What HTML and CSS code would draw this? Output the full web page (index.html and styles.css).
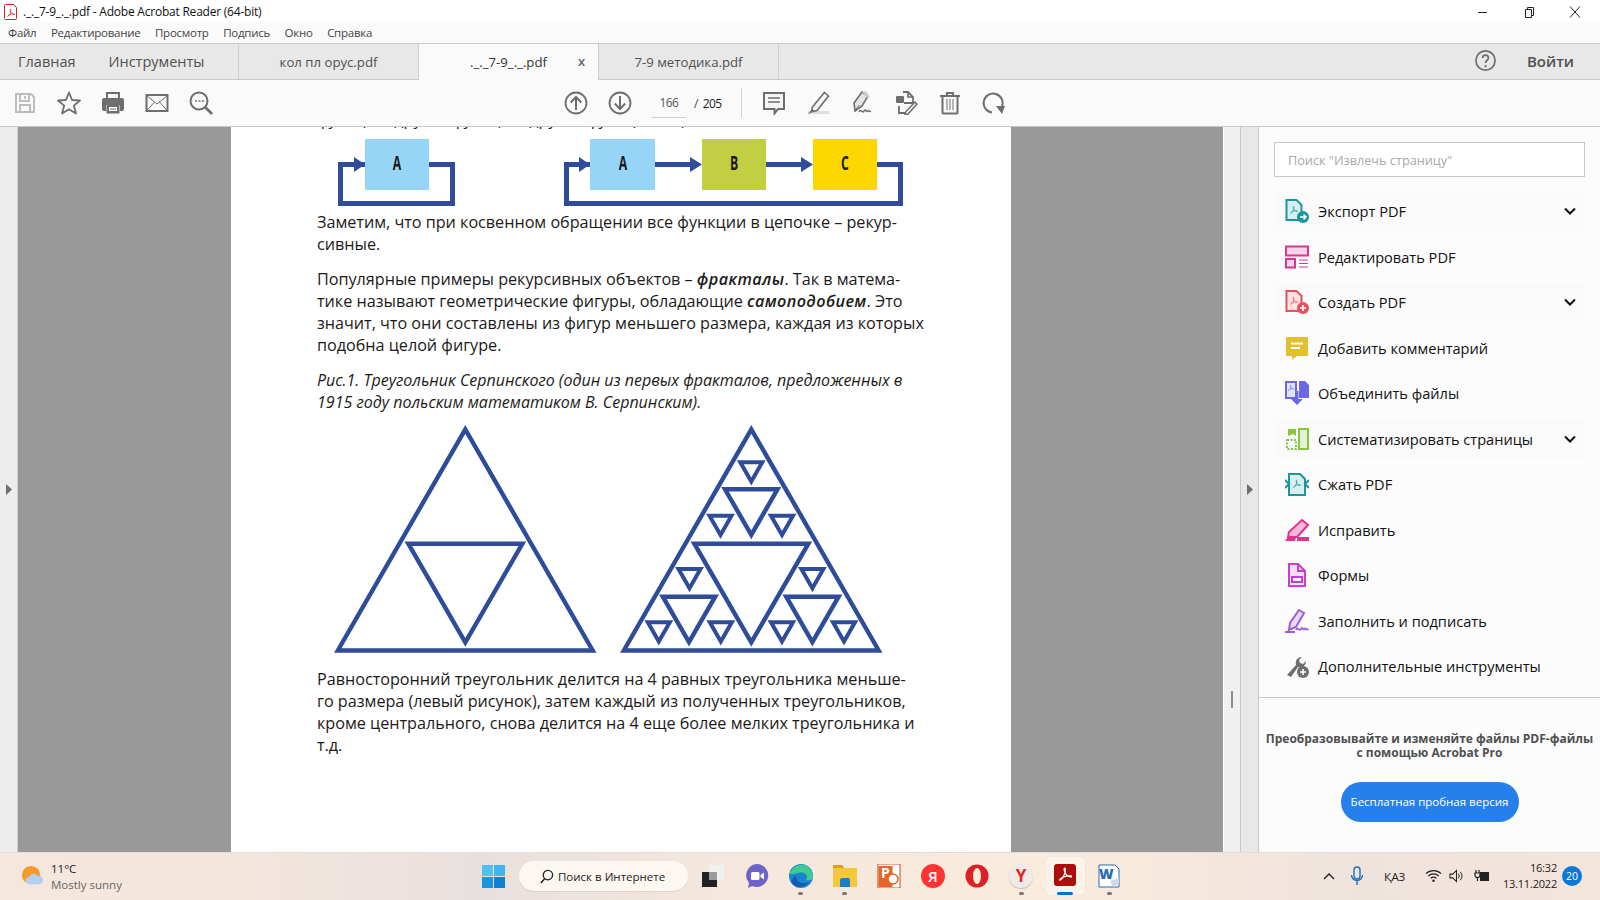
FILE: index.html
```html
<!DOCTYPE html>
<html lang="ru">
<head>
<meta charset="utf-8">
<title>Adobe Acrobat Reader</title>
<link rel="stylesheet" href="styles.css">
</head>
<body>
<svg class="defs" width="0" height="0">
  <symbol id="acro" viewBox="0 0 24 24"><path fill="none" stroke="currentColor" stroke-width="1.7" stroke-linejoin="round" d="M4 20c3-1 6-6 7.500-12 .5-3 .2-5-.7-5s-1 2.500 0 5c1.500 4 4.500 7 8.500 7.500 1.500.2 1.800-1 .2-1.500-3-.8-9.500.5-13 3-2 1.500-3.500 3-2.500 3z"/></symbol>
</svg>
<div class="titlebar">
  <svg class="ti-icon" viewBox="0 0 14 16"><path d="M1.500.5h8l3 3v11a1 1 0 0 1-1 1h-10a1 1 0 0 1-1-1v-13a1 1 0 0 1 1-1z" fill="#fff" stroke="#c9242b"/><use href="#acro" x="2" y="4" width="10" height="10" color="#c9242b"/></svg>
  <span class="ti-text">._._7-9_._.pdf - Adobe Acrobat Reader (64-bit)</span>
  <div class="winbtns">
    <svg viewBox="0 0 12 12"><path d="M1 6.500h9" stroke="#222" fill="none"/></svg>
    <svg viewBox="0 0 12 12"><path d="M2.500 3.500h6v8h-6zM4.500 3.500v-2h6v8h-2" stroke="#222" fill="none"/></svg>
    <svg viewBox="0 0 12 12"><path d="M1 .5l10 11M11 .5l-10 11" stroke="#222" fill="none"/></svg>
  </div>
</div>
<div class="menubar">
  <span>Файл</span><span>Редактирование</span><span>Просмотр</span><span>Подпись</span><span>Окно</span><span>Справка</span>
</div>
<div class="tabbar">
  <div class="hometabs"><span>Главная</span><span>Инструменты</span></div>
  <div class="tab tab-a">кол пл орус.pdf</div>
  <div class="tab tab-b active"><span>._._7-9_._.pdf</span><b class="tabx">x</b></div>
  <div class="tab tab-c">7-9 методика.pdf</div>
  <div class="tabright">
    <svg class="help" viewBox="0 0 24 24"><circle cx="12" cy="12" r="10" fill="none" stroke="#6e6e6e" stroke-width="1.800"/><path d="M9 9.500c0-4 6-4 6 0 0 2.500-3 2.500-3 5" fill="none" stroke="#6e6e6e" stroke-width="1.800"/><circle cx="12" cy="18" r="1.200" fill="#6e6e6e"/></svg>
    <span class="login">Войти</span>
  </div>
</div>
<div class="toolbar">
  <div class="tgroup tg-left">
    <svg class="tool" viewBox="0 0 24 24"><path d="M3 3h15l3 3v15H3z M7 3v7h9V3 M7 21v-7h10v7 M12 5v3" fill="none" stroke="#bdbdbd" stroke-width="2"/></svg>
    <svg class="tool" viewBox="0 0 24 24"><polygon points="12,1.500 15,9 23,9.500 16.800,14.600 19,22.500 12,18.200 5,22.500 7.200,14.600 1,9.500 9,9" fill="none" stroke="#6e6e6e" stroke-width="1.800" stroke-linejoin="round"/></svg>
    <svg class="tool" viewBox="0 0 24 24"><path d="M6 8V2h12v6" fill="none" stroke="#6e6e6e" stroke-width="2"/><path d="M3 7h18a2 2 0 0 1 2 2v9a2 2 0 0 1-2 2h-2v-6H5v6H3a2 2 0 0 1-2-2V9a2 2 0 0 1 2-2z" fill="#6e6e6e"/><path d="M5.500 14h13v8.500h-13z" fill="#6e6e6e"/><path d="M8 16h8v4H8z" fill="#fff"/><path d="M9 18h6" stroke="#6e6e6e"/></svg>
    <svg class="tool" viewBox="0 0 24 24"><rect x="1.500" y="4" width="21" height="16" fill="none" stroke="#6e6e6e" stroke-width="2"/><path d="M1.500 4.500L12 13l10.500-8.500M1.500 20L9.500 11M22.500 20l-8-9" fill="none" stroke="#6e6e6e"/></svg>
    <svg class="tool" viewBox="0 0 24 24"><circle cx="10" cy="10" r="8.500" fill="none" stroke="#6e6e6e" stroke-width="2"/><path d="M16 16l7 7" stroke="#6e6e6e" stroke-width="2.600"/><path d="M6 10h2M9.500 10h2M13 10h2" stroke="#6e6e6e" stroke-width="1.600"/></svg>
  </div>
  <div class="tgroup tg-mid">
    <svg class="tool" viewBox="0 0 24 24"><circle cx="12" cy="12" r="10.500" fill="none" stroke="#6e6e6e" stroke-width="1.800"/><path d="M12 19V6.500M6.800 11.500L12 6l5.200 5.500" fill="none" stroke="#6e6e6e" stroke-width="2"/></svg>
    <svg class="tool" viewBox="0 0 24 24"><circle cx="12" cy="12" r="10.500" fill="none" stroke="#6e6e6e" stroke-width="1.800"/><path d="M12 5v12.500M6.800 12.500L12 18l5.200-5.500" fill="none" stroke="#6e6e6e" stroke-width="2"/></svg>
    <div class="pager"><span class="pgnum">166</span><span class="pgsl">/</span><span class="pgtot">205</span></div>
    <div class="tsep"></div>
    <svg class="tool" viewBox="0 0 24 24"><path d="M2 2h20v16h-6l-3.500 4.500V18H2z" fill="#f5f5f5" stroke="#6e6e6e" stroke-width="2"/><path d="M6 7h12M6 11h12" stroke="#6e6e6e" stroke-width="1.600"/></svg>
    <svg class="tool" viewBox="0 0 24 24"><path d="M2 20h21v3H2z" fill="#dedede"/><path d="M18.500 1.500l4 3.500L11 19.500l-4.500 1-.5-4z" fill="#f5f5f5" stroke="#6e6e6e" stroke-width="1.600"/><path d="M2 23l4-5 3 2z" fill="#6e6e6e"/></svg>
    <svg class="tool" viewBox="0 0 24 24"><path d="M12 1l6 4-6 10-7 5-1-8z" fill="#e4e4e4" stroke="#6e6e6e" stroke-width="1.600"/><path d="M4.500 20l5-6" stroke="#6e6e6e"/><path d="M9 21c2-4 3 2 5-1s2 2 3.500 0 1 2 3.500 0" fill="none" stroke="#6e6e6e" stroke-width="1.500"/><path d="M12 1l4-1 4 6-2 1z" fill="#cfcfcf"/></svg>
    <svg class="tool" viewBox="0 0 24 24"><path d="M9 1h5l5 5v6h-9" fill="none" stroke="#6e6e6e" stroke-width="1.800"/><path d="M14 1v5h5" fill="none" stroke="#6e6e6e" stroke-width="1.600"/><rect x="2" y="5" width="8" height="7" rx="1" fill="#6e6e6e"/><path d="M5 15v7h7" fill="none" stroke="#6e6e6e" stroke-width="1.800"/><path d="M21 11l2 2-9 10-3 .8.800-3z" fill="#f5f5f5" stroke="#6e6e6e" stroke-width="1.500"/></svg>
    <svg class="tool" viewBox="0 0 24 24"><path d="M2 5h20M9 5V2h6v3" fill="none" stroke="#6e6e6e" stroke-width="2"/><path d="M4.500 5.500v16a1 1 0 0 0 1 1h13a1 1 0 0 0 1-1v-16" fill="none" stroke="#6e6e6e" stroke-width="2"/><path d="M9 8v11M12 8v11M15 8v11" stroke="#6e6e6e"/></svg>
    <svg class="tool" viewBox="0 0 24 24"><path d="M10 21.500A9.500 9.500 0 1 1 20 15.500" fill="none" stroke="#6e6e6e" stroke-width="2"/><path d="M14 15h9l-3 8z" fill="#6e6e6e"/></svg>
  </div>
</div>
<div class="workspace">
  <div class="rail rail-l"><svg class="railarrow" viewBox="0 0 6 11"><path d="M0 0l6 5.500L0 11z" fill="#6e6e6e"/></svg></div>
  <div class="docview">
    <div class="page">
      <div class="clipline">функции, другие функции, другие функции в цепочке</div>
      <svg class="flow" viewBox="0 0 566 68">
        <g fill="none" stroke="#2f4c9b" stroke-width="5">
          <path d="M27 25.500H2.500V64.500H114.500V25.500H91"/>
          <path d="M252 25.500H228.500V64.500H562.500V25.500H539"/>
          <path d="M316 25.500H355M428 25.500H466"/>
        </g>
        <g fill="#2f4c9b">
          <path d="M16 18l11 7.500-11 7.500z"/><path d="M241 18l11 7.500-11 7.500z"/>
          <path d="M352 18l12 7.500-12 7.500z"/><path d="M463 18l12 7.500-12 7.500z"/>
        </g>
        <rect class="sky" x="27" y="0" width="64" height="51"/>
        <rect class="sky" x="252" y="0" width="65" height="51"/>
        <rect class="lime" x="364" y="0" width="64" height="51"/>
        <rect class="sun" x="475" y="0" width="64" height="51"/>
        <g class="boxlabel">
          <text transform="translate(59 31) scale(.68 1.08)">A</text>
          <text transform="translate(285 31) scale(.68 1.08)">A</text>
          <text transform="translate(396 31) scale(.68 1.08)">B</text>
          <text transform="translate(507 31) scale(.68 1.08)">C</text>
        </g>
      </svg>
      <p class="para para-first">Заметим, что при косвенном обращении все функции в цепочке – рекур-<br>сивные.</p>
      <p class="para">Популярные примеры рекурсивных объектов – <i class="em">фракталы</i>. Так в матема-<br>тике называют геометрические фигуры, обладающие <i class="em">самоподобием</i>. Это<br>значит, что они составлены из фигур меньшего размера, каждая из которых<br>подобна целой фигуре.</p>
      <p class="para caption">Рис.1. Треугольник Серпинского (один из первых фракталов, предложенных в<br>1915 году польским математиком В. Серпинским).</p>
      <div class="figures">
        <svg class="tri" viewBox="0 0 263 228">
          <g class="tl">
            <polygon points="131.300,4.400 3.800,225.500 258.700,225.500"/>
            <polygon points="74.300,118.700 188.400,118.700 131.300,217.300"/>
          </g>
        </svg>
        <svg class="tri" viewBox="0 0 263 228">
          <g class="tl">
            <polygon points="131.300,4.400 3.800,225.500 258.700,225.500"/>
            <polygon points="74.300,118.700 188.400,118.700 131.300,217.300"/>
            <polygon points="105,64.300 157.500,64.300 131.300,109.800"/>
            <polygon points="42.800,171.700 95.200,171.700 69,217.100"/>
            <polygon points="166.200,171.700 218.600,171.700 192.400,217.100"/>
          </g>
          <g class="ts">
            <polygon points="120.300,37.300 142.300,37.300 131.300,56.500"/>
            <polygon points="89.500,90.700 111.500,90.700 100.500,109.900"/>
            <polygon points="151,90.700 173,90.700 162,109.900"/>
            <polygon points="58.500,144 80.500,144 69.500,163.200"/>
            <polygon points="181.400,144 203.400,144 192.400,163.200"/>
            <polygon points="27.800,197.300 49.800,197.300 38.800,216.500"/>
            <polygon points="89.800,197.300 111.800,197.300 100.800,216.500"/>
            <polygon points="151,197.300 173,197.300 162,216.500"/>
            <polygon points="213,197.300 235,197.300 224,216.500"/>
          </g>
        </svg>
      </div>
      <p class="para para-last">Равносторонний треугольник делится на 4 равных треугольника меньше-<br>го размера (левый рисунок), затем каждый из полученных треугольников,<br>кроме центрального, снова делится на 4 еще более мелких треугольника и<br>т.д.</p>
    </div>
  </div>
  <div class="rail rail-m"><div class="grip"></div></div>
  <div class="rail rail-r"><svg class="railarrow" viewBox="0 0 6 11"><path d="M0 0l6 5.500L0 11z" fill="#6e6e6e"/></svg></div>
  <aside class="panel">
    <div class="search">Поиск "Извлечь страницу"</div>
    <div class="rows">
      <div class="row expand">
        <svg class="picon" viewBox="0 0 24 24"><path d="M1.500 1h10l5 5v15h-15z" fill="#d9eeee" stroke="#1a969c" stroke-width="2"/><use href="#acro" x="4" y="6" width="10" height="10" color="#1a969c"/><circle cx="18" cy="18" r="6" fill="#1a969c"/><path d="M15 18h6M18.500 15.500L21 18l-2.500 2.500" fill="none" stroke="#fff" stroke-width="1.500"/></svg>
        <span>Экспорт PDF</span>
        <svg class="chev" viewBox="0 0 12 8"><path d="M1 1.500l5 5 5-5" fill="none" stroke="#111" stroke-width="2"/></svg>
      </div>
      <div class="row">
        <svg class="picon" viewBox="0 0 24 24"><rect x="1" y="1.500" width="22" height="9" fill="#f6d3e6" stroke="#d83790" stroke-width="2"/><rect x="1" y="14" width="9" height="8.500" fill="#f6d3e6" stroke="#d83790" stroke-width="2"/><path d="M14 15h9M14 18.500h9M14 22h9" stroke="#d83790" stroke-width="1.200"/></svg>
        <span>Редактировать PDF</span>
      </div>
      <div class="row expand">
        <svg class="picon" viewBox="0 0 24 24"><path d="M1.500 1h10l5 5v15h-15z" fill="#fbe3e4" stroke="#e5515a" stroke-width="2"/><use href="#acro" x="4" y="6" width="10" height="10" color="#e5515a"/><circle cx="18" cy="18" r="6" fill="#e5515a"/><path d="M15 18h6M18 15v6" fill="none" stroke="#fff" stroke-width="1.600"/></svg>
        <span>Создать PDF</span>
        <svg class="chev" viewBox="0 0 12 8"><path d="M1 1.500l5 5 5-5" fill="none" stroke="#111" stroke-width="2"/></svg>
      </div>
      <div class="row">
        <svg class="picon" viewBox="0 0 24 24"><path d="M2 1h20a1 1 0 0 1 1 1v17a1 1 0 0 1-1 1H12l-5 4v-4H2a1 1 0 0 1-1-1V2a1 1 0 0 1 1-1z" fill="#e0c02e"/><path d="M6 7.500h12M6 12h9" stroke="#fff" stroke-width="2"/></svg>
        <span>Добавить комментарий</span>
      </div>
      <div class="row">
        <svg class="picon" viewBox="0 0 24 24"><path d="M1 1h10v16H1z" fill="#e3e2fb" stroke="#6a68e8" stroke-width="2"/><use href="#acro" x="2" y="3" width="8" height="8" color="#6a68e8"/><path d="M14 0h6l4 4v13H14z" fill="#6a68e8"/><path d="M12 10v9" stroke="#6a68e8" stroke-width="3"/><path d="M6 18h12l-6 6z" fill="#6a68e8"/></svg>
        <span>Объединить файлы</span>
      </div>
      <div class="row expand">
        <svg class="picon" viewBox="0 0 24 24"><path d="M2 13h9v9H2z" fill="none" stroke="#86c640" stroke-width="2" stroke-dasharray="2 1.500"/><path d="M14 2h9v20h-9z" fill="#e3f2d2" stroke="#86c640" stroke-width="2"/><path d="M3 2h8v7l-3-2-5 2z" fill="#86c640"/></svg>
        <span>Систематизировать страницы</span>
        <svg class="chev" viewBox="0 0 12 8"><path d="M1 1.500l5 5 5-5" fill="none" stroke="#111" stroke-width="2"/></svg>
      </div>
      <div class="row">
        <svg class="picon" viewBox="0 0 24 24"><path d="M4 2h11l5 5v16H4z" fill="#d9eeee" stroke="#1a969c" stroke-width="2"/><use href="#acro" x="7" y="7" width="10" height="10" color="#1a969c"/><path d="M0 8l4 4-4 4M24 8l-4 4 4 4" fill="none" stroke="#1a969c" stroke-width="2"/></svg>
        <span>Сжать PDF</span>
      </div>
      <div class="row">
        <svg class="picon" viewBox="0 0 24 24"><path d="M17 2l6 5-11 12H3l1-5z" fill="#f4b9d8" stroke="#e0358f" stroke-width="2"/><path d="M0 23l3-4h7l1 1-1 3zM12 19h12v4H12z" fill="#e0358f"/></svg>
        <span>Исправить</span>
      </div>
      <div class="row">
        <svg class="picon" viewBox="0 0 24 24"><path d="M4 1h9l7 7v15H4z" fill="#f7dcf8" stroke="#c73ed0" stroke-width="2"/><path d="M13 1v7h7" fill="none" stroke="#c73ed0" stroke-width="2"/><rect x="7" y="14" width="10" height="5" fill="#fff" stroke="#c73ed0" stroke-width="2"/></svg>
        <span>Формы</span>
      </div>
      <div class="row">
        <svg class="picon" viewBox="0 0 24 24"><path d="M14 1l5 3-8 14-7 3 1-7z" fill="#ead9f8" stroke="#9c5fd9" stroke-width="2"/><path d="M0 23h10" stroke="#9c5fd9" stroke-width="2"/><path d="M11 21c2-4 3 2 5-1s2 2 3.500 0 1.500 2 4 0" fill="none" stroke="#9c5fd9" stroke-width="1.800"/></svg>
        <span>Заполнить и подписать</span>
      </div>
      <div class="row">
        <svg class="picon" viewBox="0 0 24 24"><path d="M2 21L11 11c-1-4 1-8 6-8l-3 3 1 3 3 1 3-3c0 5-4 7-8 6L6 23z" fill="#6e6e6e"/><circle cx="18" cy="18" r="6" fill="#6e6e6e"/><path d="M15 18h6M18 15v6" stroke="#fff" stroke-width="1.600"/></svg>
        <span>Дополнительные инструменты</span>
      </div>
    </div>
    <div class="promo">
      <p class="promotext">Преобразовывайте и изменяйте файлы PDF-файлы<br>с помощью Acrobat Pro</p>
      <div class="trial">Бесплатная пробная версия</div>
    </div>
  </aside>
</div>
<footer class="taskbar">
  <div class="weather">
    <svg class="wicon" viewBox="0 0 24 24"><circle cx="11" cy="11" r="10" fill="#f59b2b"/><path d="M9 21a4 4 0 0 1 0-8 5 5 0 0 1 9-1 4.500 4.500 0 0 1 3 9z" fill="#b5cfee"/></svg>
    <div class="wtext"><span class="wtemp">11°C</span><span class="wdesc">Mostly sunny</span></div>
  </div>
  <svg class="startlogo" viewBox="0 0 22 22"><rect x="0" y="0" width="10.500" height="10.500" fill="#4cc2f1"/><rect x="11.500" y="0" width="10.500" height="10.500" fill="#3fb4ee"/><rect x="0" y="11.500" width="10.500" height="10.500" fill="#1a94e0"/><rect x="11.500" y="11.500" width="10.500" height="10.500" fill="#0f7fd6"/></svg>
  <div class="tsearch"><svg class="tsicon" viewBox="0 0 16 16"><circle cx="9.500" cy="6.500" r="5" fill="none" stroke="#222" stroke-width="1.400"/><path d="M6 10.500L2 15" stroke="#222" stroke-width="1.600"/></svg><span>Поиск в Интернете</span></div>
  <div class="apps">
    <div class="app"><svg class="aicon" viewBox="0 0 24 24"><rect x="1" y="8" width="15" height="15" fill="#222"/><rect x="8" y="1" width="15" height="15" fill="#f0f0f0"/><rect x="8" y="8" width="8" height="8" fill="#9b9b9b"/></svg></div>
    <div class="app"><svg class="aicon" viewBox="0 0 24 24"><path d="M12 0a11.500 11.500 0 1 1-5 22l-4 2 1-5A11.500 11.500 0 0 1 12 0z" fill="#6b63c9"/><rect x="6" y="8" width="8.500" height="8" rx="1.500" fill="#fff"/><path d="M15.500 11l3.500-2.500v7L15.500 13z" fill="#fff"/></svg></div>
    <div class="app dot"><svg class="aicon" viewBox="0 0 24 24"><circle cx="12" cy="12" r="12" fill="#1b83d1"/><path d="M1 9C5-2 22-3 24 12c.2 4-5 5-7 4 3-4-1-8-6-7.500S3 12 1 9z" fill="#3fca8f"/><path d="M7 12c0 6 6 9 13 6-4 6-13 7-17 1-1-3 2-7 4-7z" fill="#0d5fb0"/></svg></div>
    <div class="app dot"><svg class="aicon" viewBox="0 0 24 24"><path d="M0 1h9l2 3h13v19H0z" fill="#f5c83a"/><path d="M0 4h11L9 1H0z" fill="#dfa11d"/><path d="M7 16a2 2 0 0 1 2-2h6a2 2 0 0 1 2 2v7H7z" fill="#1a7fc9"/></svg></div>
    <div class="app"><svg class="aicon" viewBox="0 0 24 24"><rect x="1" y="0" width="22" height="24" fill="#fff" stroke="#d14a1e"/><rect x="1.500" y="2" width="14" height="21" fill="#e8642a"/><text class="pptx" x="4" y="14">P</text><circle cx="16" cy="15" r="5" fill="#fff" stroke="#e8642a" stroke-width="1.500"/></svg></div>
    <div class="app"><div class="ya">Я</div></div>
    <div class="app"><svg class="aicon" viewBox="0 0 24 24"><circle cx="12" cy="12" r="11.500" fill="#dc1f28"/><ellipse cx="12" cy="12" rx="4" ry="8" fill="#f9ecdc"/></svg></div>
    <div class="app dot"><div class="yb">Y</div></div>
    <div class="app on"><div class="acrotile"><svg class="acrosvg" viewBox="0 0 24 24"><use href="#acro" width="24" height="24" color="#fff"/></svg></div></div>
    <div class="app dot"><svg class="aicon" viewBox="0 0 24 24"><path d="M2 1h16l4 4v18H2z" fill="#fff" stroke="#2a68b8"/><text class="wordx" x="2" y="15">W</text><path d="M13 17l9-3v6l-6 3z" fill="#cfd9e8"/></svg></div>
  </div>
  <div class="tray">
    <svg class="tr t-chev" viewBox="0 0 12 8"><path d="M1 7l5-5 5 5" fill="none" stroke="#222" stroke-width="1.400"/></svg>
    <svg class="tr t-mic" viewBox="0 0 14 20"><rect x="4" y="1" width="6" height="12" rx="3" fill="none" stroke="#1f6fc0" stroke-width="1.400"/><path d="M1.500 9a5.500 5.500 0 0 0 11 0M7 14.500V19" fill="none" stroke="#1f6fc0" stroke-width="1.400"/></svg>
    <span class="t-lang">ҚАЗ</span>
    <svg class="tr t-wifi" viewBox="0 0 18 14"><path d="M1 4.500a11.500 11.500 0 0 1 16 0M3.500 7a8 8 0 0 1 11 0M6 9.500a4.300 4.300 0 0 1 6 0" fill="none" stroke="#222" stroke-width="1.300"/><circle cx="9" cy="12" r="1.300" fill="#222"/></svg>
    <svg class="tr t-snd" viewBox="0 0 16 14"><path d="M1 5h3l4-4v12l-4-4H1z" fill="none" stroke="#222" stroke-width="1.100"/><path d="M10 4.500a4 4 0 0 1 0 5M12 2.500a7 7 0 0 1 0 9" fill="none" stroke="#222"/></svg>
    <svg class="tr t-bat" viewBox="0 0 16 14"><path d="M6 3h9v9H6z" fill="#222"/><path d="M2 1v3M5 1v3M1 4h5v2a2.500 2.500 0 0 1-5 0z M3.500 8v4" fill="none" stroke="#222" stroke-width="1.200"/></svg>
    <div class="clock"><span>16:32</span><span>13.11.2022</span></div>
    <div class="badge">20</div>
  </div>
</footer>
</body>
</html>
```
FILE: styles.css
```css
* { box-sizing: border-box; }
html, body { margin: 0; padding: 0; }
body {
  width: 1600px;
  height: 900px;
  overflow: hidden;
  display: flex;
  flex-direction: column;
  font-family: "Open Sans", "Noto Sans", sans-serif;
  color: #222;
  background: #fff;
}
.defs { position: absolute; }

/* title bar */
.titlebar { height: 23px; flex: none; display: flex; align-items: center; background: #fff; padding-left: 4px; }
.ti-icon { width: 14px; height: 16px; flex: none; }
.ti-text { margin-left: 5px; font-size: 12px; color: #111; letter-spacing: -.22px; }
.winbtns { margin-left: auto; display: flex; gap: 34px; padding-right: 19px; }
.winbtns svg { width: 12px; height: 12px; }

/* menu */
.menubar { height: 21px; flex: none; display: flex; align-items: center; gap: 14.500px; padding: 0 0 1px 8px; background: #fafafa; border-bottom: 1px solid #c8c8c8; font-size: 11.500px; color: #444; letter-spacing: -.25px; }

/* tabs */
.tabbar { height: 36px; flex: none; display: flex; background: #e8e8e8; border-bottom: 1px solid #c8c8c8; color: #505050; font-size: 13.200px; }
.hometabs { width: 239px; display: flex; gap: 33px; align-items: center; padding: 0 0 1px 18px; border-right: 1px solid #cfcfcf; font-size: 14.500px; }
.tab { display: flex; align-items: center; justify-content: center; border-right: 1px solid #cfcfcf; position: relative; }
.tab-a { width: 180px; }
.tab-b { width: 180px; }
.tab-c { width: 180px; }
.active { background: #fafafa; height: 36px; color: #333; }
.tabx { position: absolute; left: 159px; top: 8px; font-size: 13px; font-weight: 600; color: #666; }
.tabright { margin-left: auto; display: flex; align-items: center; padding: 0 26px 2px 0; }
.help { width: 23px; height: 23px; margin-right: 30px; }
.login { font-size: 15px; font-weight: 600; color: #505050; }

/* toolbar */
.toolbar { height: 47px; flex: none; display: flex; align-items: center; background: #fafafa; border-bottom: 1px solid #c8c8c8; padding-left: 13px; }
.tgroup { display: flex; align-items: center; gap: 20px; }
.tg-mid { margin-left: 351px; }
.tool { width: 24px; height: 24px; flex: none; }
.pager { display: flex; align-items: center; width: 81px; font-size: 12px; color: #444; letter-spacing: -.6px; }
.pgnum { width: 34px; height: 30px; line-height: 30px; text-align: center; border-bottom: 1px solid #ccc; color: #555; }
.pgsl { margin-left: 8px; }
.pgtot { margin-left: 5px; color: #222; }
.tsep { width: 1px; height: 30px; background: #d5d5d5; margin: 0 0 0 -12px; }

/* workspace */
.workspace { flex: 1; display: flex; min-height: 0; }
.rail { flex: none; display: flex; align-items: center; justify-content: center; }
.rail-l { width: 18px; background: #ededed; border-right: 1px solid #d0d0d0; }
.railarrow { width: 6px; height: 11px; margin-bottom: 1px; }
.docview { flex: 1; background: #999; display: flex; justify-content: center; min-width: 0; padding-left: 1px; }
.page { width: 780px; background: #fff; padding-left: 86px; overflow: hidden; color: #1c1a18; font-size: 16.200px; line-height: 22px; letter-spacing: -.02px; }
.clipline { margin-top: -19px; height: 22px; white-space: nowrap; }
.flow { display: block; width: 566px; height: 68px; margin: 9px 0 0 21px; }
.sky { fill: #96d5f5; }
.lime { fill: #c3cf42; }
.sun { fill: #fcd800; }
.boxlabel text { font-size: 18px; font-weight: 700; fill: #1c1a18; text-anchor: middle; font-family: "Open Sans", sans-serif; }
.para { margin: 13px 0 0; white-space: nowrap; }
.para-first { margin-top: 4px; }
.em { font-weight: 600; letter-spacing: .4px; }
.caption { font-style: italic; font-size: 16px; letter-spacing: 0; }
.figures { display: flex; gap: 23px; margin: 12px 0 0 17px; }
.tri { display: block; width: 263px; height: 228px; flex: none; }
.tl polygon, .ts polygon { fill: none; stroke: #2f4c9b; stroke-miterlimit: 10; }
.tl polygon { stroke-width: 4.400px; }
.ts polygon { stroke-width: 4px; }
.para-last { margin-top: 15px; }
.rail-m { width: 18px; background: #f0f0f0; border-left: 1px solid #fff; border-right: 1px solid #c8c8c8; }
.grip { width: 2px; height: 17px; background: #8c8c8c; margin-top: 420px; }
.rail-r { width: 18px; background: #e8e8e8; border-right: 1px solid #c8c8c8; }

/* right panel */
.panel { width: 341px; flex: none; background: #fcfcfc; display: flex; flex-direction: column; font-size: 14.600px; color: #111; }
.search { margin: 15px 15px 0; height: 35px; flex: none; background: #fff; border: 1px solid #c8c8c8; padding-left: 13px; line-height: 35px; font-size: 12.700px; color: #a8a8a8; }
.rows { display: flex; flex-direction: column; gap: 6px; padding: 14.500px 15px 0; }
.row { height: 39.500px; display: flex; align-items: center; padding-left: 11px; }
.expand { background: #fafafa; }
.picon { width: 24px; height: 24px; flex: none; margin-right: 9px; }
.chev { width: 12px; height: 8px; margin-left: auto; margin-right: 9px; }
.promo { margin-top: 10.500px; border-top: 1px solid #c8c8c8; display: flex; flex-direction: column; align-items: center; }
.promotext { margin: 34px 0 0; text-align: center; font-size: 12px; line-height: 14.500px; font-weight: 700; color: #505050; white-space: nowrap; }
.trial { margin-top: 21px; width: 178px; height: 40px; line-height: 40px; text-align: center; border-radius: 20px; background: #2680eb; color: #fff; font-size: 11.500px; }

/* taskbar */
.taskbar { height: 48px; flex: none; display: flex; align-items: center; padding-bottom: 1px; position: relative; border-top: 1px solid #e8ddd5; background: linear-gradient(90deg, #f5e7dc 0%, #f3e6dd 15%, #e8e0df 30%, #f4e7dc 45%, #f9ecdc 65%, #efe3de 85%, #f4e5dc 100%); }
.weather { display: flex; align-items: center; width: 482px; padding-left: 21px; }
.wicon { width: 22px; height: 24px; flex: none; }
.wtext { display: flex; flex-direction: column; margin-left: 8px; padding-top: 2px; font-size: 11.500px; line-height: 16px; }
.wtemp { color: #222; }
.wdesc { color: #666; }
.startlogo { width: 23px; height: 23px; flex: none; }
.tsearch { margin-left: 14px; width: 169px; height: 30px; border-radius: 15px; background: #fdf7f2; display: flex; align-items: center; padding-left: 20px; font-size: 11.500px; color: #222; box-shadow: 0 1px 1px rgba(0,0,0,.08); }
.tsicon { width: 15px; height: 15px; margin-right: 4px; flex: none; }
.apps { display: flex; margin-left: 5px; gap: 5.100px; }
.app { width: 39px; height: 38px; display: flex; align-items: center; justify-content: center; position: relative; border-radius: 4px; }
.aicon { width: 24px; height: 24px; }
.dot::after { content: ""; position: absolute; left: 17px; bottom: 0; width: 5px; height: 3px; border-radius: 2px; background: #777; }
.on { background: #fbf3ea; box-shadow: 0 0 1px rgba(0,0,0,.12); }
.on::after { content: ""; position: absolute; left: 11px; bottom: 0; width: 16px; height: 3px; border-radius: 2px; background: #0a6fcf; }
.acrotile { width: 22px; height: 22px; border-radius: 3px; background: #ab0f0a; display: flex; align-items: center; justify-content: center; margin-bottom: 3px; }
.acrosvg { width: 17px; height: 17px; }
.ya { width: 24px; height: 24px; border-radius: 50%; background: #f33; color: #fff; text-align: center; font-size: 15px; line-height: 24px; font-weight: 600; }
.yb { width: 24px; height: 24px; border-radius: 50%; background: #f0ebe8; color: #e52620; text-align: center; font-size: 17px; line-height: 24px; font-weight: 700; box-shadow: 0 1px 1px rgba(0,0,0,.2); }
.pptx { font-size: 14px; font-weight: 700; fill: #fff; font-family: "Open Sans", sans-serif; }
.wordx { font-size: 14px; font-weight: 800; fill: #2a68b8; font-family: "Open Sans", sans-serif; }
.tray { margin-left: auto; display: flex; align-items: center; font-size: 11.500px; color: #222; padding-right: 18px; position: relative; }
.tr { flex: none; }
.t-chev { width: 12px; height: 8px; margin-right: 15px; }
.t-mic { width: 14px; height: 20px; margin-right: 20px; }
.t-lang { width: 32px; margin-right: 9px; letter-spacing: -.2px; }
.t-wifi { width: 17px; height: 14px; margin-right: 7px; }
.t-snd { width: 15px; height: 14px; margin-right: 10px; }
.t-bat { width: 16px; height: 14px; margin-right: 5px; }
.clock { display: flex; flex-direction: column; align-items: flex-end; line-height: 16px; font-size: 11px; width: 62px; margin-right: 5px; letter-spacing: -.2px; }
.badge { width: 20px; height: 20px; border-radius: 50%; background: #0a78d4; color: #fff; text-align: center; line-height: 20px; font-size: 10.500px; }
```
